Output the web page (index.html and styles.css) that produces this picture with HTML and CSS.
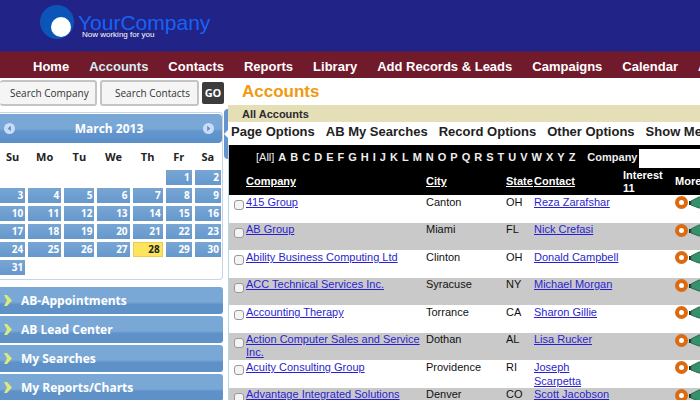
FILE: index.html
```html
<!DOCTYPE html>
<html lang="en">
<head>
    <meta charset="UTF-8">
    <meta name="viewport" content="width=device-width, initial-scale=1.0">
    <title>YourCompany - Accounts</title>
    <link rel="stylesheet" href="styles.css">
</head>
<body>
    <header class="banner">
        <svg class="logo" viewBox="0 0 36 36" aria-hidden="true">
            <circle cx="18" cy="18" r="17" fill="#0c55b8"/>
            <circle cx="22" cy="23" r="10" fill="#fff"/>
        </svg>
        <div class="brand">
            <div class="brand-name">YourCompany</div>
            <div class="tagline">Now working for you</div>
        </div>
    </header>

    <nav class="main-nav">
        <a href="#">Home</a>
        <a href="#" class="active">Accounts</a>
        <a href="#">Contacts</a>
        <a href="#">Reports</a>
        <a href="#">Library</a>
        <a href="#">Add Records &amp; Leads</a>
        <a href="#">Campaigns</a>
        <a href="#">Calendar</a>
        <a href="#">Admin</a>
    </nav>

    <div class="page">
        <aside class="sidebar">
            <form class="search">
                <input type="text" class="search-company" placeholder="Search Company" aria-label="Search Company">
                <input type="text" class="search-contacts" placeholder="Search Contacts" aria-label="Search Contacts">
                <button type="button">GO</button>
            </form>

            <div class="calendar">
                <div class="calendar-head">
                    <button type="button" aria-label="Previous month">
                        <svg viewBox="0 0 11 11"><circle cx="5.5" cy="5.5" r="5.5" fill="#c9dcf8"/><path d="M6.8 2.8L3.6 5.5l3.2 2.7z" fill="#5b8fcb"/></svg>
                    </button>
                    <span>March 2013</span>
                    <button type="button" aria-label="Next month">
                        <svg viewBox="0 0 11 11"><circle cx="5.5" cy="5.5" r="5.5" fill="#c9dcf8"/><path d="M4.2 2.8l3.2 2.7-3.2 2.7z" fill="#5b8fcb"/></svg>
                    </button>
                </div>
                <table class="days">
                    <colgroup>
                        <col class="d1"><col class="d2"><col class="d3"><col class="d4"><col class="d3"><col class="d6"><col class="d6">
                    </colgroup>
                    <thead>
                        <tr><th>Su</th><th>Mo</th><th>Tu</th><th>We</th><th>Th</th><th>Fr</th><th>Sa</th></tr>
                    </thead>
                    <tbody id="days"></tbody>
                </table>
            </div>

            <div class="accordion">
                <button type="button"><svg viewBox="0 0 8 11"><path d="M0 0h3l5 5.5L3 11H0l3-5.5z"/></svg>AB-Appointments</button>
                <button type="button"><svg viewBox="0 0 8 11"><path d="M0 0h3l5 5.5L3 11H0l3-5.5z"/></svg>AB Lead Center</button>
                <button type="button"><svg viewBox="0 0 8 11"><path d="M0 0h3l5 5.5L3 11H0l3-5.5z"/></svg>My Searches</button>
                <button type="button"><svg viewBox="0 0 8 11"><path d="M0 0h3l5 5.5L3 11H0l3-5.5z"/></svg>My Reports/Charts</button>
            </div>

            <button type="button" class="collapse" aria-label="Collapse sidebar">
                <svg viewBox="0 0 4 8"><path d="M4 0L0 4l4 4z" fill="#fff"/></svg>
            </button>
        </aside>

        <main>
            <h1>Accounts</h1>
            <h2>All Accounts</h2>
            <div class="options">
                <a href="#">Page Options</a>
                <a href="#">AB My Searches</a>
                <a href="#">Record Options</a>
                <a href="#">Other Options</a>
                <a href="#">Show Menu</a>
            </div>
            <div class="list">
                <div class="filter">
                    <div class="letters" id="letters"><a href="#" class="all">[All]</a></div>
                    <label for="company">Company</label>
                    <input type="text" id="company">
                </div>
                <table class="accounts">
                    <colgroup>
                        <col class="c-check"><col><col class="c-city"><col class="c-state"><col class="c-contact"><col class="c-interest"><col class="c-more">
                    </colgroup>
                    <thead>
                        <tr>
                            <th></th>
                            <th><a href="#">Company</a></th>
                            <th><a href="#">City</a></th>
                            <th><a href="#">State</a></th>
                            <th><a href="#">Contact</a></th>
                            <th>Interest 11</th>
                            <th>More</th>
                        </tr>
                    </thead>
                    <tbody id="accounts"></tbody>
                </table>
            </div>
        </main>
    </div>

    <script src="script.js"></script>
</body>
</html>
```
FILE: styles.css
```css
* {
    margin: 0;
    padding: 0;
    box-sizing: border-box;
}
body {
    font-family: "Liberation Sans", Arial, sans-serif;
    font-size: 11px;
    background: #fff;
    color: #111;
    overflow: hidden;
}
button {
    border: none;
    cursor: pointer;
}
svg {
    display: block;
}

/* Header */
.banner {
    display: flex;
    gap: 3px;
    height: 51px;
    padding: 4px 0 0 39px;
    background: #212387;
}
.logo {
    width: 36px;
    height: 36px;
}
.brand-name {
    padding-top: 9px;
    font-size: 21px;
    line-height: 20px;
    color: #1763f5;
}
.tagline {
    padding-left: 4px;
    margin-top: -3px;
    font-size: 8px;
    line-height: 10px;
    color: #fff;
}
.main-nav {
    display: flex;
    gap: 20px;
    height: 27px;
    padding-left: 33px;
    background: #701a2c;
    border-top: 1px solid #4a1f55;
    overflow: hidden;
}
.main-nav a {
    color: #fff;
    font-size: 13px;
    font-weight: bold;
    line-height: 30px;
    text-decoration: none;
    white-space: nowrap;
}
.main-nav .active {
    color: #d5eef5;
}

.page {
    display: flex;
}

/* Sidebar */
.sidebar {
    position: relative;
    flex: none;
    width: 228px;
    font-family: "Open Sans", "Noto Sans", sans-serif;
}
.search {
    display: flex;
    align-items: center;
    gap: 3px;
    height: 29px;
}
.search input {
    height: 26px;
    border: 2px solid #c4c4c4;
    border-radius: 3px;
    background: #f5f5f5;
    font-family: inherit;
    font-size: 10px;
}
.search input::placeholder {
    color: #333;
    opacity: 1;
}
.search .search-company {
    width: 97px;
    padding-left: 10px;
    border-left: none;
}
.search .search-contacts {
    width: 99px;
    padding-left: 13px;
}
.search button {
    width: 22px;
    height: 22px;
    border-radius: 2px;
    background: #3c3c3c;
    color: #fff;
    font-family: inherit;
    font-size: 11px;
    font-weight: bold;
}
.calendar {
    width: 223px;
    height: 168px;
    margin-top: 5px;
    padding-top: 1px;
    border: 1px solid #c5d5e6;
    border-left: none;
    border-radius: 0 4px 4px 0;
}
.calendar-head {
    display: flex;
    align-items: center;
    justify-content: space-between;
    height: 29px;
    padding: 0 8px 0 4px;
    border-radius: 0 4px 4px 0;
    background: linear-gradient(#79a7d6 50%, #6496cd 60%, #5b8fcb);
    color: #fff;
    font-size: 12px;
    font-weight: bold;
}
.calendar-head button {
    width: 11px;
    height: 11px;
    background: none;
}
.days {
    table-layout: fixed;
    width: 227px;
    margin-left: -3px;
    border-spacing: 3px;
}
.d1 { width: 25px; }
.d2 { width: 33px; }
.d3 { width: 30px; }
.d4 { width: 32px; }
.d6 { width: 26px; }
.days th {
    height: 21px;
    font-size: 11px;
    line-height: 20px;
    color: #222;
}
.days td {
    height: 15px;
}
.days a {
    display: block;
    height: 15px;
    padding-right: 2px;
    background: linear-gradient(#78a6d4, #6698cc);
    color: #fff;
    font-size: 10px;
    font-weight: bold;
    line-height: 15px;
    text-align: right;
    text-decoration: none;
}
.days .today {
    background: #fce55c;
    border: 1px solid #e8cf52;
    line-height: 13px;
    color: #222;
}
.accordion {
    display: flex;
    flex-direction: column;
    gap: 2px;
    width: 223px;
    margin-top: 7px;
}
.accordion button {
    display: flex;
    align-items: center;
    gap: 9px;
    height: 27px;
    padding-left: 4px;
    border-radius: 0 3px 3px 0;
    background: linear-gradient(#79a7d6 55%, #5e91c8 65%);
    color: #fff;
    font-family: inherit;
    font-size: 12px;
    font-weight: bold;
}
.accordion svg {
    width: 8px;
    height: 11px;
    fill: #dcea7c;
}
.collapse {
    position: absolute;
    top: 31px;
    right: 0;
    width: 4px;
    height: 50px;
    border-radius: 4px 0 0 4px;
    background: #6496cd;
}

/* Accounts list */
main {
    flex: 1;
    min-width: 0;
}
h1 {
    padding-left: 14px;
    font-size: 17px;
    line-height: 27px;
    color: #f09a10;
}
h2 {
    height: 17px;
    padding-left: 14px;
    background: #e5dfb8;
    font-size: 11px;
    line-height: 19px;
    color: #2b2b2b;
}
.options {
    display: flex;
    gap: 11px;
    height: 23px;
    padding-left: 3px;
    overflow: hidden;
}
.options a {
    color: #222;
    font-size: 13px;
    font-weight: bold;
    line-height: 19px;
    text-decoration: none;
    white-space: nowrap;
}
.list {
    border-left: 1px solid #b9d3e8;
}
.filter {
    display: flex;
    align-items: center;
    height: 23px;
    padding-left: 27px;
    background: #000;
    color: #eee;
}
.letters {
    display: flex;
    gap: 4px;
    margin-right: 12px;
    font-weight: bold;
}
.letters a {
    color: #eee;
    text-decoration: none;
}
.letters .all {
    font-weight: normal;
}
.filter label {
    font-weight: bold;
}
.filter input {
    flex: 1;
    min-width: 0;
    height: 19px;
    margin: 3px 0 0 2px;
    border: none;
    background: #fff;
}
.accounts {
    table-layout: fixed;
    width: 100%;
    border-collapse: collapse;
}
.c-check { width: 17px; }
.c-city { width: 80px; }
.c-state { width: 28px; }
.c-contact { width: 89px; }
.c-interest { width: 52px; }
.c-more { width: 25px; }
.accounts thead {
    background: #000;
    color: #fff;
}
.accounts th {
    height: 27px;
    line-height: 13px;
    text-align: left;
}
.accounts th a {
    color: #fff;
}
.accounts td {
    height: 28px;
    line-height: 14px;
    vertical-align: top;
}
.accounts tr:nth-child(even) td {
    height: 27px;
    background: #c9c9c9;
    line-height: 13px;
}
.accounts td a {
    color: #2a1fd0;
}
.accounts input {
    appearance: none;
    display: block;
    width: 10px;
    height: 10px;
    margin: 5px 0 0 5px;
    border: 1px solid #999;
    border-radius: 3px;
    background: #f4f4f4;
}
.more {
    display: flex;
    gap: 1px;
    padding-top: 1px;
    overflow: hidden;
}
.more svg {
    flex: none;
}
```
FILE: script.js
```js
const daysBody = document.getElementById('days');
const letters = document.getElementById('letters');
const accountsBody = document.getElementById('accounts');

const accounts = [
    ['415 Group', 'Canton', 'OH', 'Reza Zarafshar'],
    ['AB Group', 'Miami', 'FL', 'Nick Crefasi'],
    ['Ability Business Computing Ltd', 'Clinton', 'OH', 'Donald Campbell'],
    ['ACC Technical Services Inc.', 'Syracuse', 'NY', 'Michael Morgan'],
    ['Accounting Therapy', 'Torrance', 'CA', 'Sharon Gillie'],
    ['Action Computer Sales and Service Inc.', 'Dothan', 'AL', 'Lisa Rucker'],
    ['Acuity Consulting Group', 'Providence', 'RI', 'Joseph<br>Scarpetta'],
    ['Advantage Integrated Solutions', 'Denver', 'CO', 'Scott Jacobson']
];

// March 2013 starts on a Friday
let html = '';
for (let week = 0; week < 6; week++) {
    html += '<tr>';
    for (let i = 0; i < 7; i++) {
        const day = week * 7 + i - 4;
        const valid = day >= 1 && day <= 31;
        html += '<td>' + (valid ? `<a href="#"${day === 28 ? ' class="today"' : ''}>${day}</a>` : '') + '</td>';
    }
    html += '</tr>';
}
daysBody.innerHTML = html;

'ABCDEFGHIJKLMNOPQRSTUVWXYZ'.split('').forEach(letter => {
    const link = document.createElement('a');
    link.href = '#';
    link.textContent = letter;
    letters.appendChild(link);
});

accountsBody.innerHTML = accounts.map(([name, city, state, contact]) => `
    <tr>
        <td><input type="checkbox" aria-label="Select ${name}"></td>
        <td><a href="#">${name}</a></td>
        <td>${city}</td>
        <td>${state}</td>
        <td><a href="#">${contact}</a></td>
        <td></td>
        <td>
            <div class="more">
                <svg width="13" height="13" viewBox="0 0 13 13"><circle cx="6.5" cy="6.5" r="4.5" fill="#fff" stroke="#dc6a10" stroke-width="4"/></svg>
                <svg width="16" height="13" viewBox="0 0 16 13"><path d="M0 5h2v4H0z" fill="#222"/><path d="M2 5l8-4h6v11h-6L2 9z" fill="#36906a" stroke="#286a50"/></svg>
            </div>
        </td>
    </tr>`).join('');
```
